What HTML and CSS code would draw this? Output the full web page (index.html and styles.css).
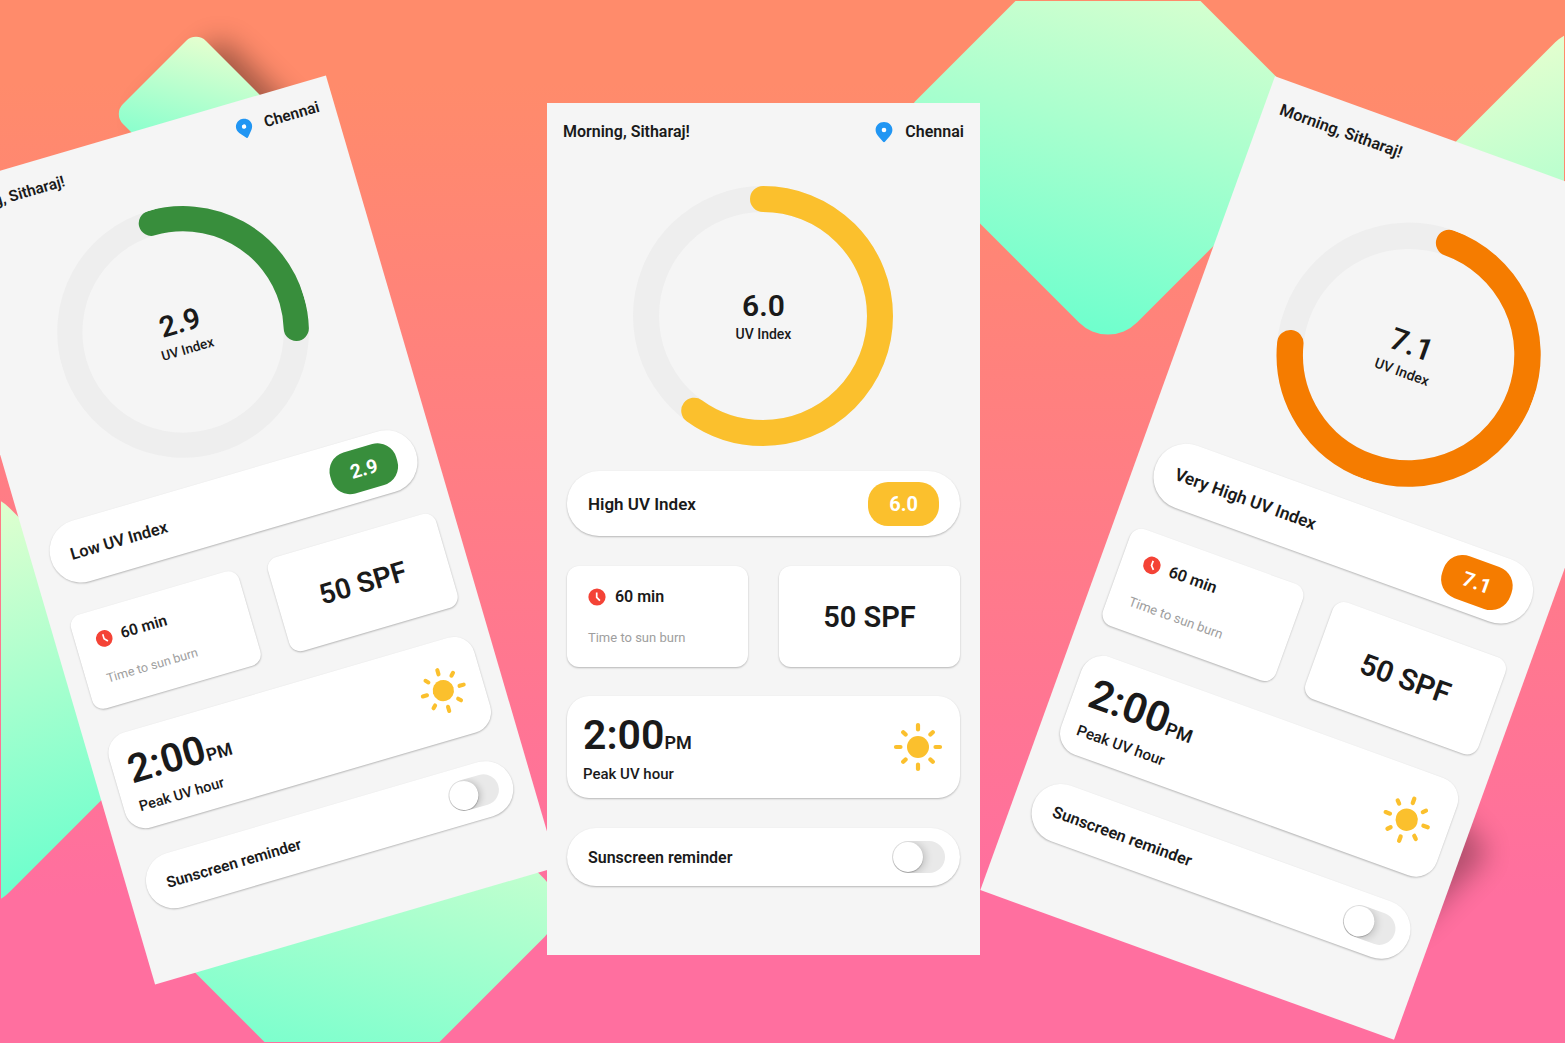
FILE: index.html
```html
<!DOCTYPE html>
<html lang="en">
<head>
<meta charset="utf-8">
<meta name="viewport" content="width=device-width, initial-scale=1">
<title>UV Index</title>
<link rel="stylesheet" href="styles.css">
</head>
<body>
<svg class="defs" aria-hidden="true">
  <symbol id="pin" viewBox="0 0 18 22">
    <path fill="#2196f3" d="M9 1C4.300 1 .600 4.500 .600 9c0 2.600 1.300 4.700 2.900 6.500l4.600 5.200c.5.600 1.300.6 1.800 0l4.600-5.200c1.600-1.800 2.900-3.900 2.900-6.500C17.400 4.500 13.700 1 9 1z"/>
    <circle cx="9" cy="9" r="2.300" fill="#fff"/>
  </symbol>
  <symbol id="clock" viewBox="0 0 18 18">
    <circle cx="9" cy="9" r="8.600" fill="#f44336"/>
    <path d="M8.700 4.400V9.300L11.900 12.600" fill="none" stroke="#fff" stroke-width="1.700"/>
  </symbol>
  <symbol id="sun" viewBox="0 0 50 50">
    <circle cx="25" cy="25" r="11" fill="#fbc02d"/>
    <path d="M25 3v4.500M25 42.500v4.500M3 25h4.500M42.500 25h4.500M10.200 10.200l2.400 2.400M37.400 37.400l2.400 2.400M10.200 39.800l2.400-2.400M37.400 12.600l2.400-2.400" fill="none" stroke="#fbc02d" stroke-width="4.200" stroke-linecap="round"/>
  </symbol>
</svg>

<main class="board">
  <svg class="backdrop" viewBox="0 0 1565 1043" preserveAspectRatio="xMidYMid slice" aria-hidden="true">
    <defs>
      <linearGradient id="mint" gradientUnits="userSpaceOnUse" x1="55" y1="-210" x2="-55" y2="210">
        <stop offset="0" stop-color="#e8ffcf"/>
        <stop offset="1" stop-color="#6affcd"/>
      </linearGradient>
      <linearGradient id="mint-side" gradientUnits="userSpaceOnUse" x1="-40" y1="-210" x2="80" y2="190">
        <stop offset="0" stop-color="#e8ffcf"/>
        <stop offset="1" stop-color="#6affcd"/>
      </linearGradient>
      <linearGradient id="mint-small" gradientUnits="userSpaceOnUse" x1="18" y1="-78" x2="-12" y2="40">
        <stop offset="0" stop-color="#e8ffcf"/>
        <stop offset="1" stop-color="#84ffcd"/>
      </linearGradient>
      <filter id="soft" x="-50%" y="-50%" width="200%" height="200%"><feGaussianBlur stdDeviation="14"/></filter>
      <clipPath id="frame"><rect x="1" y="1" width="1563" height="1041"/></clipPath>
      <path id="rhomb" d="M-29 -192.500A41 41 0 0 1 29 -192.500L192.500 -29A41 41 0 0 1 192.500 29L29 192.500A41 41 0 0 1 -29 192.500L-192.500 29A41 41 0 0 1 -192.500 -29Z"/>
      <path id="chip" d="M-10 -73A14 14 0 0 1 10 -73L73 -10A14 14 0 0 1 73 10L10 73A14 14 0 0 1 -10 73L-73 10A14 14 0 0 1 -73 -10Z"/>
    </defs>
    <g clip-path="url(#frame)">
      <use href="#rhomb" transform="translate(1108 130)" fill="url(#mint)"/>
      <use href="#rhomb" transform="translate(1584 235)" fill="url(#mint-side)"/>
      <use href="#rhomb" transform="translate(-20 700)" fill="url(#mint-side)"/>
      <use href="#rhomb" transform="translate(352 908)" fill="url(#mint)"/>
      <use href="#chip" transform="translate(220 119)" opacity=".36" filter="url(#soft)"/>
      <use href="#chip" transform="translate(196 114)" fill="url(#mint-small)"/>
      <use href="#chip" transform="translate(1408 852)" opacity=".3" filter="url(#soft)"/>
    </g>
  </svg>

  <section class="screen screen-low">
    <header class="top">
      <span>Morning, Sitharaj!</span>
      <span class="place"><svg class="pin"><use href="#pin"/></svg>Chennai</span>
    </header>
    <div class="gauge">
      <svg class="ring" viewBox="0 0 260 260" aria-hidden="true">
        <circle class="track" cx="130" cy="130" r="117"/>
        <circle class="level" cx="130" cy="130" r="117" pathLength="100" stroke-dasharray="29 71"/>
      </svg>
      <div class="reading"><strong>2.9</strong><span>UV Index</span></div>
    </div>
    <div class="panels">
      <div class="card status"><span>Low UV Index</span><span class="badge">2.9</span></div>
      <div class="tiles">
        <div class="card burn">
          <div class="minutes"><svg class="clock"><use href="#clock"/></svg>60 min</div>
          <div class="note">Time to sun burn</div>
        </div>
        <div class="card spf">50 SPF</div>
      </div>
      <div class="card peak">
        <div>
          <div class="hour">2:00<small>PM</small></div>
          <div class="caption">Peak UV hour</div>
        </div>
        <svg class="sun"><use href="#sun"/></svg>
      </div>
      <label class="card reminder">Sunscreen reminder<input class="switch" type="checkbox" role="switch"></label>
    </div>
  </section>

  <section class="screen screen-very-high">
    <header class="top">
      <span>Morning, Sitharaj!</span>
      <span class="place"><svg class="pin"><use href="#pin"/></svg>Chennai</span>
    </header>
    <div class="gauge">
      <svg class="ring" viewBox="0 0 260 260" aria-hidden="true">
        <circle class="track" cx="130" cy="130" r="117"/>
        <circle class="level" cx="130" cy="130" r="117" pathLength="100" stroke-dasharray="71 29"/>
      </svg>
      <div class="reading"><strong>7.1</strong><span>UV Index</span></div>
    </div>
    <div class="panels">
      <div class="card status"><span>Very High UV Index</span><span class="badge">7.1</span></div>
      <div class="tiles">
        <div class="card burn">
          <div class="minutes"><svg class="clock"><use href="#clock"/></svg>60 min</div>
          <div class="note">Time to sun burn</div>
        </div>
        <div class="card spf">50 SPF</div>
      </div>
      <div class="card peak">
        <div>
          <div class="hour">2:00<small>PM</small></div>
          <div class="caption">Peak UV hour</div>
        </div>
        <svg class="sun"><use href="#sun"/></svg>
      </div>
      <label class="card reminder">Sunscreen reminder<input class="switch" type="checkbox" role="switch"></label>
    </div>
  </section>

  <section class="screen screen-high">
    <header class="top">
      <span>Morning, Sitharaj!</span>
      <span class="place"><svg class="pin"><use href="#pin"/></svg>Chennai</span>
    </header>
    <div class="gauge">
      <svg class="ring" viewBox="0 0 260 260" aria-hidden="true">
        <circle class="track" cx="130" cy="130" r="117"/>
        <circle class="level" cx="130" cy="130" r="117" pathLength="100" stroke-dasharray="60 40"/>
      </svg>
      <div class="reading"><strong>6.0</strong><span>UV Index</span></div>
    </div>
    <div class="panels">
      <div class="card status"><span>High UV Index</span><span class="badge">6.0</span></div>
      <div class="tiles">
        <div class="card burn">
          <div class="minutes"><svg class="clock"><use href="#clock"/></svg>60 min</div>
          <div class="note">Time to sun burn</div>
        </div>
        <div class="card spf">50 SPF</div>
      </div>
      <div class="card peak">
        <div>
          <div class="hour">2:00<small>PM</small></div>
          <div class="caption">Peak UV hour</div>
        </div>
        <svg class="sun"><use href="#sun"/></svg>
      </div>
      <label class="card reminder">Sunscreen reminder<input class="switch" type="checkbox" role="switch"></label>
    </div>
  </section>
</main>
</body>
</html>
```
FILE: styles.css
```css
* {
  box-sizing: border-box;
}

body {
  margin: 0;
  font-family: Roboto, "Liberation Sans", sans-serif;
  font-weight: 600;
  color: #1a1a1a;
}

.defs {
  position: absolute;
  width: 0;
  height: 0;
}

.board {
  position: relative;
  min-height: 100vh;
  overflow: hidden;
  background: linear-gradient(#ff8b6b 8%, #ff6f9f 86%);
}

.backdrop {
  position: absolute;
  inset: 0;
  width: 100%;
  height: 100%;
}

/* Phone screens, laid freely over the backdrop */
.screen {
  position: absolute;
  width: 433px;
  padding-bottom: 69px;
  background: #f5f5f5;
}

.screen-low {
  --level: #388e3c;
  left: 24px;
  top: 104px;
  transform: rotate(-16.3deg) scale(0.968);
}

.screen-high {
  --level: #fbc02d;
  left: 34.95%;
  top: 103px;
}

.screen-very-high {
  --level: #f57c00;
  right: 14px;
  top: 132px;
  transform: rotate(19.9deg) scale(1.016);
}

.top {
  display: flex;
  justify-content: space-between;
  align-items: center;
  padding: 16px 16px 0;
  font-size: 16px;
  line-height: 25px;
}

.place {
  display: flex;
  align-items: center;
  gap: 12px;
}

.pin {
  width: 18px;
  height: 22px;
}

.gauge {
  display: grid;
  place-items: center;
  margin: 42px 0 25px;
}

.gauge > * {
  grid-area: 1 / 1;
}

.ring {
  width: 260px;
  height: 260px;
  transform: rotate(-90deg);
}

.ring circle {
  fill: none;
  stroke-width: 26;
}

.track {
  stroke: #eee;
}

.level {
  stroke: var(--level);
  stroke-linecap: round;
}

.reading {
  display: flex;
  flex-direction: column;
  align-items: center;
  font-size: 14px;
  font-weight: 500;
  line-height: 20px;
}

.reading strong {
  font-size: 30px;
  font-weight: 600;
  line-height: 36px;
}

.panels {
  display: flex;
  flex-direction: column;
  gap: 30px;
  padding: 0 20px;
}

.card {
  background: #fff;
  border-radius: 12px;
  box-shadow: 0 1px 2px rgba(0, 0, 0, 0.26);
}

.status,
.reminder {
  display: flex;
  align-items: center;
  justify-content: space-between;
  border-radius: 32px;
  padding: 0 21px;
}

.status {
  height: 65px;
  font-size: 17px;
}

.badge {
  padding: 0 21px;
  border-radius: 20px;
  background: var(--level);
  color: #fff;
  font-size: 20px;
  font-weight: 700;
  line-height: 44px;
}

.tiles {
  display: grid;
  grid-template-columns: 1fr 1fr;
  gap: 31px;
  height: 100px;
}

.burn {
  padding: 19px 21px;
}

.minutes {
  display: flex;
  align-items: center;
  gap: 9px;
  font-size: 16px;
  line-height: 24px;
}

.clock {
  width: 18px;
  height: 18px;
}

.note {
  margin-top: 19px;
  color: #9e9e9e;
  font-size: 13px;
  font-weight: 400;
  line-height: 20px;
}

.spf {
  display: grid;
  place-items: center;
  font-size: 29px;
}

.peak {
  display: flex;
  align-items: center;
  justify-content: space-between;
  height: 102px;
  padding: 0 17px 0 16px;
  border-radius: 22px;
}

.hour {
  padding-top: 6px;
  font-size: 41px;
  line-height: 40px;
}

.hour small {
  font-size: 18px;
}

.caption {
  font-size: 15px;
  font-weight: 500;
  line-height: 22px;
}

.sun {
  width: 50px;
  height: 50px;
}

.reminder {
  height: 58px;
  padding-right: 15px;
  font-size: 16px;
}

.switch {
  appearance: none;
  width: 53px;
  height: 32px;
  margin: 0;
  border-radius: 16px;
  overflow: hidden;
  background: #e9e9e9;
}

.switch::before {
  content: "";
  display: block;
  width: 30px;
  height: 30px;
  margin: 1px;
  border-radius: 50%;
  background: #fff;
  box-shadow: 0 1px 1px rgba(0, 0, 0, 0.24), 2px 1px 8px rgba(0, 0, 0, 0.2);
}

.switch:checked {
  background: var(--level);
}

.switch:checked::before {
  margin-left: 22px;
}
```
